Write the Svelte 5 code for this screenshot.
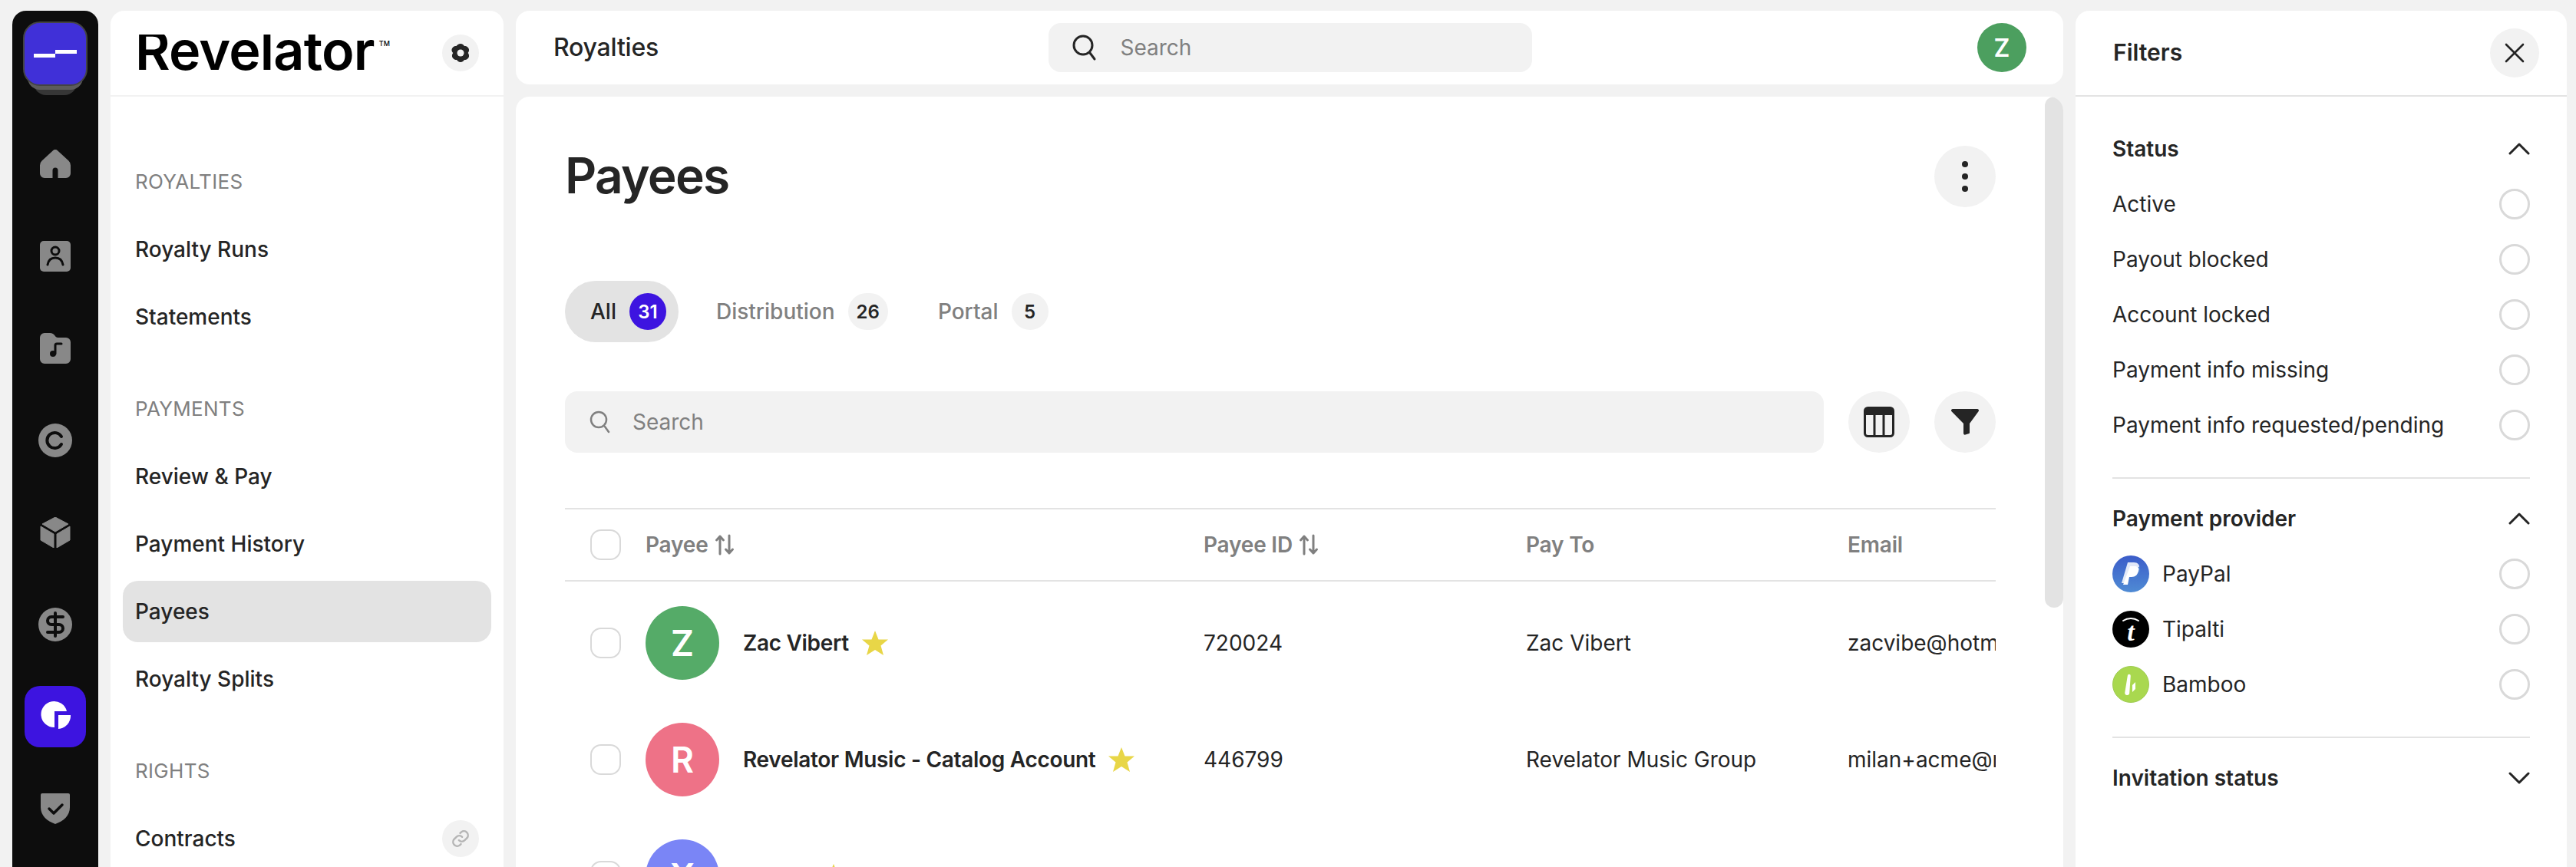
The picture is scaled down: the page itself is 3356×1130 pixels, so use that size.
<script>
  const nav = [
    { label: 'ROYALTIES', items: ['Royalty Runs', 'Statements'] },
    { label: 'PAYMENTS', items: ['Review & Pay', 'Payment History', 'Payees', 'Royalty Splits'] },
    { label: 'RIGHTS', items: ['Contracts'] }
  ];

  const tabs = [
    { name: 'All', count: 31, active: true },
    { name: 'Distribution', count: 26 },
    { name: 'Portal', count: 5 }
  ];

  const payees = [
    { initial: 'Z', color: '#55ab68', name: 'Zac Vibert', id: '720024', payTo: 'Zac Vibert', email: 'zacvibe@hotmail.com' },
    { initial: 'R', color: '#ee7287', name: 'Revelator Music - Catalog Account', id: '446799', payTo: 'Revelator Music Group', email: 'milan+acme@revelator.com' },
    { initial: 'X', color: '#7a85f6', name: 'Xavier', id: '', payTo: '', email: '' }
  ];

  const statuses = ['Active', 'Payout blocked', 'Account locked', 'Payment info missing', 'Payment info requested/pending'];
  const providers = ['PayPal', 'Tipalti', 'Bamboo'];
</script>

<div class="page">
  <aside class="rail">
    <div class="logo-stack">
      <div class="logo-layer third"></div>
      <div class="logo-layer second"></div>
      <div class="logo">
        <svg width="56" height="10" viewBox="0 0 56 10"><path d="M0 5h28v5H0zM28 0h28v5H28z" fill="#fff" /></svg>
      </div>
    </div>

    <div class="rail-icons">
      <div class="rail-icon">
        <svg width="40" height="38" viewBox="0 0 40 38"><path d="M17 1.2a4.4 4.4 0 0 1 6 0l14.4 13.4A8 8 0 0 1 40 20.500V31a6 6 0 0 1-6 6H23.500V27a3.500 3.500 0 0 0-7 0v10H6a6 6 0 0 1-6-6V20.500a8 8 0 0 1 2.600-5.900z" fill="#888" /></svg>
      </div>
      <div class="rail-icon">
        <svg width="40" height="40" viewBox="0 0 40 40"><rect width="40" height="40" rx="5" fill="#888" /><circle cx="20" cy="13" r="5" fill="none" stroke="#0d0d0d" stroke-width="3" /><path d="M10 31c1-6 5-9 10-9s9 3 10 9" fill="none" stroke="#0d0d0d" stroke-width="3" stroke-linecap="round" /></svg>
      </div>
      <div class="rail-icon">
        <svg width="40" height="40" viewBox="0 0 40 40"><path d="M0 6a6 6 0 0 1 6-6h7c3 0 5 1.500 6.500 3.500 1 1.500 2 2.500 4 2.500H34a6 6 0 0 1 6 6v22a6 6 0 0 1-6 6H6a6 6 0 0 1-6-6z" fill="#888" /><circle cx="17" cy="27" r="4" fill="#0d0d0d" /><path d="M20 27V16a2 2 0 0 1 2-2h6" fill="none" stroke="#0d0d0d" stroke-width="3" stroke-linecap="round" /></svg>
      </div>
      <div class="rail-icon">
        <svg width="44" height="44" viewBox="0 0 44 44"><circle cx="22" cy="22" r="22" fill="#888" /><path d="M30 17a10 10 0 1 0 0 10" fill="none" stroke="#0d0d0d" stroke-width="4" stroke-linecap="round" /></svg>
      </div>
      <div class="rail-icon">
        <svg width="40" height="40" viewBox="0 0 40 40"><path d="M20 0l17 9-17 10L3 9zM1 12l17 10v18L1 30zM39 12L22 22v18l17-10z" fill="#888" stroke="#888" stroke-width="1" stroke-linejoin="round" /></svg>
      </div>
      <div class="rail-icon">
        <svg width="44" height="44" viewBox="0 0 44 44"><circle cx="22" cy="22" r="22" fill="#888" /><path d="M32 12H17a5 5 0 0 0 0 10h10a5 5 0 0 1 0 10H12M22 7v30" fill="none" stroke="#0d0d0d" stroke-width="4" stroke-linecap="round" /></svg>
      </div>
      <div class="rail-icon active">
        <svg width="40" height="42" viewBox="0 0 40 42"><path d="M19 35a17 17 0 1 1 16-21H19z" fill="#fff" /><path d="M24 19h16a17 17 0 0 1-16 18z" fill="#fff" /></svg>
      </div>
      <div class="rail-icon">
        <svg width="38" height="40" viewBox="0 0 38 40"><path d="M2 0h34a2 2 0 0 1 2 2v16c0 11-8 18-19 22C8 36 0 29 0 18V2a2 2 0 0 1 2-2z" fill="#888" /><path d="M11 20l6 6 11-11" fill="none" stroke="#0d0d0d" stroke-width="3.500" stroke-linecap="round" stroke-linejoin="round" /></svg>
      </div>
    </div>
  </aside>

  <aside class="sidebar">
    <header class="brand">
      <div class="wordmark"><span class="word">Revelator</span><span class="tm">TM</span></div>
      <button class="round small">
        <svg width="24" height="24" viewBox="0 0 24 24"><path d="M12 0c2.500 0 4 1.500 5 3 2 0 4 .5 5.500 3 1.200 2.500.3 4.500-.8 6 1.100 1.500 2 3.500.8 6-1.500 2.500-3.500 3-5.500 3-1 1.500-2.500 3-5 3s-4-1.500-5-3c-2 0-4-.5-5.500-3-1.200-2.500-.3-4.500.8-6C.7 10.500-.2 8.500 1 6c1.500-2.500 3.500-3 5.500-3 1-1.500 3-3 5.500-3z" fill="#252525" /><circle cx="12" cy="12" r="4.500" fill="#f2f2f2" /></svg>
      </button>
    </header>

    <nav class="nav">
      {#each nav as section}
        <div class="nav-label">{section.label}</div>
        <ul class="nav-list">
          {#each section.items as item}
            <li class="nav-item" class:current={item === 'Payees'}>
              {item}
              {#if item === 'Contracts'}
                <button class="round small">
                  <svg width="26" height="26" viewBox="0 0 24 24" fill="none" stroke="#b5b5b5" stroke-width="2.200" stroke-linecap="round"><path d="M10 14a5 5 0 0 0 7 0l3-3a5 5 0 0 0-7-7l-1.500 1.500" /><path d="M14 10a5 5 0 0 0-7 0l-3 3a5 5 0 0 0 7 7l1.500-1.500" /></svg>
                </button>
              {/if}
            </li>
          {/each}
        </ul>
      {/each}
    </nav>
  </aside>

  <div class="center">
    <header class="topbar">
      <div class="crumb">Royalties</div>
      <div class="top-search">
        <svg width="34" height="36" viewBox="0 0 34 36" fill="none" stroke="#252525" stroke-width="3" stroke-linecap="round"><circle cx="15" cy="15" r="12" /><path d="M24 25l6 8" /></svg>
        <span>Search</span>
      </div>
      <div class="top-user"><span class="user-avatar">Z</span></div>
    </header>

    <main class="content">
      <div class="title-row">
        <h1>Payees</h1>
        <button class="round big">
          <svg width="8" height="40" viewBox="0 0 8 40" fill="#252525"><circle cx="4" cy="4" r="4" /><circle cx="4" cy="20" r="4" /><circle cx="4" cy="36" r="4" /></svg>
        </button>
      </div>

      <div class="tabs">
        {#each tabs as tab}
          <div class="tab" class:on={tab.active}>
            <span class="tab-name">{tab.name}</span>
            <span class="tab-count">{tab.count}</span>
          </div>
        {/each}
      </div>

      <div class="tools">
        <div class="table-search">
          <svg width="28" height="30" viewBox="0 0 28 30" fill="none" stroke="#808080" stroke-width="2.500" stroke-linecap="round"><circle cx="12" cy="12" r="10" /><path d="M20 21l5 7" /></svg>
          <span>Search</span>
        </div>
        <button class="round big">
          <svg width="40" height="40" viewBox="0 0 40 40"><rect x="1.500" y="1.500" width="37" height="37" rx="4" fill="none" stroke="#252525" stroke-width="3" /><path d="M3 3h34v8H3z" fill="#252525" /><path d="M14 11v27M26 11v27" stroke="#252525" stroke-width="3" /></svg>
        </button>
        <button class="round big">
          <svg width="36" height="34" viewBox="0 0 36 34"><path d="M2 0h32a2 2 0 0 1 1.700 3L24 19v12a1.500 1.500 0 0 1-.5 1l-5 1.500a2 2 0 0 1-2.500-1.500V19L.3 3A2 2 0 0 1 2 0z" fill="#252525" /></svg>
        </button>
      </div>

      <div class="table">
        <div class="thead grid-row">
          <span class="check"></span>
          <span class="th">Payee
            <svg width="26" height="28" viewBox="0 0 26 28" fill="none" stroke="#808080" stroke-width="3" stroke-linecap="round" stroke-linejoin="round"><path d="M7 26V3M2.500 8L7 3l4.500 5M19 2v23M14.500 20l4.500 5 4.500-5" /></svg>
          </span>
          <span class="th">Payee ID
            <svg width="26" height="28" viewBox="0 0 26 28" fill="none" stroke="#808080" stroke-width="3" stroke-linecap="round" stroke-linejoin="round"><path d="M7 26V3M2.500 8L7 3l4.500 5M19 2v23M14.500 20l4.500 5 4.500-5" /></svg>
          </span>
          <span class="th">Pay To</span>
          <span class="th">Email</span>
        </div>

        <div class="tbody">
          {#each payees as p}
            <div class="grid-row trow">
              <span class="check"></span>
              <div class="payee">
                <span class="avatar" style="background: {p.color};">{p.initial}</span>
                <span class="payee-name">{p.name}</span>
                <svg width="34" height="32" viewBox="0 0 34 32"><path d="M17 0l4.500 11.500H34l-9.500 8L28 32l-11-7-11 7 3.500-12.500L0 11.500h12.500z" fill="#e8d647" /></svg>
              </div>
              <span class="cell">{p.id}</span>
              <span class="cell">{p.payTo}</span>
              <span class="cell">{p.email}</span>
            </div>
          {/each}
        </div>
      </div>

      <div class="scroll-thumb"></div>
    </main>
  </div>

  <aside class="filters">
    <header class="filters-head">
      <span class="filters-title">Filters</span>
      <button class="round close">
        <svg width="26" height="26" viewBox="0 0 26 26" fill="none" stroke="#252525" stroke-width="2.600" stroke-linecap="round"><path d="M2 2l22 22M24 2L2 24" /></svg>
      </button>
    </header>

    <div class="filters-body">
      <section class="group">
        <div class="group-head">
          Status
          <svg width="28" height="16" viewBox="0 0 28 16" fill="none" stroke="#252525" stroke-width="3" stroke-linecap="round" stroke-linejoin="round"><path d="M2 14L14 2l12 12" /></svg>
        </div>
        <div class="options">
          {#each statuses as s}
            <div class="option"><span>{s}</span><span class="radio"></span></div>
          {/each}
        </div>
      </section>

      <section class="group">
        <div class="group-head">
          Payment provider
          <svg width="28" height="16" viewBox="0 0 28 16" fill="none" stroke="#252525" stroke-width="3" stroke-linecap="round" stroke-linejoin="round"><path d="M2 14L14 2l12 12" /></svg>
        </div>
        <div class="options">
          {#each providers as name}
            <div class="option">
              <span class="provider">
                {#if name === 'PayPal'}
                  <svg width="48" height="48" viewBox="0 0 48 48">
                    <defs><linearGradient id="pp" x1="0" y1="0" x2="0" y2="1"><stop offset="0" stop-color="#3b5cc9" /><stop offset="1" stop-color="#4f8bd4" /></linearGradient></defs>
                    <circle cx="24" cy="24" r="24" fill="url(#pp)" />
                    <path d="M20 9h8c5 0 8 3 7 8-1 6-5 9-10 9h-4l-2 10h-7z" fill="#fff" opacity=".85" />
                    <path d="M23 14h6c4 0 6 2 5 6-1 5-4 8-9 8h-3l-2 10h-6z" fill="#fff" />
                    <path d="M34 15c2 2 2 4 1 7-1 5-5 8-10 8" fill="none" stroke="#4a7fd0" stroke-width="1.500" />
                  </svg>
                {:else if name === 'Tipalti'}
                  <svg width="48" height="48" viewBox="0 0 48 48">
                    <circle cx="24" cy="24" r="24" fill="#000" />
                    <path d="M14 13c6-4 14-4 20 0" fill="none" stroke="#fff" stroke-width="2" stroke-linecap="round" />
                    <text x="24" y="39" text-anchor="middle" class="tipalti-t">t</text>
                  </svg>
                {:else}
                  <svg width="48" height="48" viewBox="0 0 48 48">
                    <circle cx="24" cy="24" r="23.500" fill="#a9d84f" stroke="#9ecb52" />
                    <path d="M19 13c0-3 4-3 4 0v22c0 2-1 3-3 3s-3-1-3-3z" fill="#fff" transform="rotate(4 20 24)" />
                    <path d="M26 25l4-4v9l-4 4z" fill="#fff" />
                  </svg>
                {/if}
                <span>{name}</span>
              </span>
              <span class="radio"></span>
            </div>
          {/each}
        </div>
      </section>

      <section class="group last">
        <div class="group-head">
          Invitation status
          <svg width="28" height="16" viewBox="0 0 28 16" fill="none" stroke="#252525" stroke-width="3" stroke-linecap="round" stroke-linejoin="round"><path d="M2 2l12 12L26 2" /></svg>
        </div>
      </section>
    </div>
  </aside>
</div>

<style>
  :global(body) {
    margin: 0;
    background: #f2f2f2;
  }

  .page {
    display: flex;
    gap: 16px;
    height: 1130px;
    padding: 14px 12px 0 16px;
    box-sizing: border-box;
    overflow: hidden;
    font-family: Inter, "Liberation Sans", sans-serif;
    font-size: 28px;
    color: #252525;
  }

  button {
    border: none;
    padding: 0;
    font: inherit;
  }

  /* icon rail */
  .rail {
    flex: 0 0 112px;
    background: #0d0d0d;
    border-radius: 18px 18px 0 0;
    display: flex;
    flex-direction: column;
    align-items: center;
    padding-top: 14px;
    box-sizing: border-box;
  }

  .logo-stack {
    position: relative;
    width: 84px;
    height: 96px;
  }

  .logo {
    position: relative;
    box-sizing: border-box;
    width: 84px;
    height: 84px;
    background: #4030d8;
    border: 2px solid #444;
    border-radius: 22px;
    display: flex;
    align-items: center;
    justify-content: center;
  }

  .logo-layer {
    position: absolute;
    border-radius: 0 0 16px 16px;
  }

  .logo-layer.second {
    left: 6px;
    right: 6px;
    top: 60px;
    height: 29px;
    background: #5c5c5c;
  }

  .logo-layer.third {
    left: 14px;
    right: 14px;
    top: 66px;
    height: 30px;
    background: #363636;
  }

  .rail-icons {
    display: flex;
    flex-direction: column;
    align-items: center;
    margin-top: 30px;
  }

  .rail-icon {
    width: 80px;
    height: 120px;
    display: flex;
    align-items: center;
    justify-content: center;
  }

  .rail-icon.active {
    height: 80px;
    margin: 20px 0;
    background: #3d14e0;
    border-radius: 20px;
  }

  /* second column */
  .sidebar {
    flex: 0 0 512px;
    background: #fff;
    border-radius: 18px 18px 0 0;
    overflow: hidden;
  }

  .brand {
    height: 112px;
    box-sizing: border-box;
    border-bottom: 2px solid #f2f2f2;
    display: flex;
    justify-content: space-between;
    padding: 31px 32px 0;
  }

  .wordmark {
    display: flex;
    height: 48px;
    overflow: hidden;
    color: #000;
  }

  .word {
    font-size: 70px;
    line-height: 41px;
    font-weight: 600;
    letter-spacing: -0.800px;
  }

  .tm {
    font-size: 9px;
    font-weight: 500;
    line-height: 9px;
    margin: 7px 0 0 6px;
  }

  .round {
    display: flex;
    align-items: center;
    justify-content: center;
    border-radius: 50%;
    background: #f2f2f2;
    flex: none;
  }

  .round.small {
    width: 48px;
    height: 48px;
  }

  .round.big {
    width: 80px;
    height: 80px;
  }

  .round.close {
    width: 64px;
    height: 64px;
  }

  .nav {
    padding: 87px 16px 0;
  }

  .nav-label {
    height: 48px;
    line-height: 48px;
    padding-left: 16px;
    font-size: 26px;
    letter-spacing: 0.300px;
    color: #808080;
    margin-bottom: 24px;
  }

  .nav-list {
    list-style: none;
    margin: 0 0 56px;
    padding: 0;
    display: flex;
    flex-direction: column;
    gap: 8px;
  }

  .nav-item {
    height: 80px;
    padding: 0 16px;
    border-radius: 20px;
    display: flex;
    align-items: center;
    justify-content: space-between;
    font-weight: 500;
  }

  .nav-item.current {
    background: #e3e3e3;
  }

  /* main column */
  .center {
    flex: 0 0 2016px;
    display: flex;
    flex-direction: column;
    gap: 16px;
  }

  .topbar {
    height: 96px;
    flex: none;
    background: #fff;
    border-radius: 18px;
    display: grid;
    grid-template-columns: 1fr 630px 1fr;
    align-items: center;
    padding: 0 48px 0 49px;
  }

  .crumb {
    font-size: 32px;
    font-weight: 500;
    letter-spacing: -0.200px;
    padding-bottom: 2px;
  }

  .top-search {
    height: 64px;
    background: #f2f2f2;
    border-radius: 16px;
    display: flex;
    align-items: center;
    gap: 30px;
    padding-left: 30px;
    color: #808080;
  }

  .top-user {
    display: flex;
    justify-content: flex-end;
  }

  .user-avatar {
    width: 64px;
    height: 64px;
    border-radius: 50%;
    background: #4c9f5f;
    color: #fff;
    font-size: 32px;
    font-weight: 600;
    display: flex;
    align-items: center;
    justify-content: center;
  }

  .content {
    position: relative;
    flex: 1;
    min-height: 0;
    background: #fff;
    border-radius: 18px 18px 0 0;
    padding: 64px 88px 0 64px;
    overflow: hidden;
  }

  .title-row {
    display: flex;
    justify-content: space-between;
    align-items: center;
  }

  h1 {
    margin: 0 0 3px;
    font-size: 64px;
    font-weight: 600;
    letter-spacing: -1.700px;
  }

  .tabs {
    display: flex;
    margin-top: 96px;
  }

  .tab {
    height: 80px;
    border-radius: 40px;
    padding: 0 16px 0 33px;
    display: flex;
    align-items: center;
    gap: 17px;
    color: #808080;
    font-weight: 500;
    margin-right: 16px;
  }

  .tab.on {
    background: #e3e3e3;
    color: #252525;
  }

  .tab-count {
    min-width: 48px;
    height: 48px;
    padding: 0 11px;
    box-sizing: border-box;
    border-radius: 24px;
    background: #f2f2f2;
    color: #252525;
    font-size: 24px;
    font-weight: 600;
    display: flex;
    align-items: center;
    justify-content: center;
  }

  .tab.on .tab-count {
    background: #3d14e0;
    color: #fff;
  }

  .tools {
    display: flex;
    gap: 32px;
    margin-top: 64px;
  }

  .table-search {
    flex: 1;
    height: 80px;
    background: #f2f2f2;
    border-radius: 16px;
    display: flex;
    align-items: center;
    gap: 28px;
    padding-left: 32px;
    color: #808080;
  }

  .table {
    margin-top: 72px;
    border-top: 2px solid #e3e3e3;
  }

  .grid-row {
    display: grid;
    grid-template-columns: 105px 727px 420px 419px 193px;
    align-items: center;
    white-space: nowrap;
    overflow: hidden;
  }

  .thead {
    height: 92px;
    border-bottom: 2px solid #e3e3e3;
  }

  .check {
    width: 40px;
    height: 40px;
    margin-left: 33px;
    box-sizing: border-box;
    border: 2.500px solid #d9d9d9;
    border-radius: 14px;
  }

  .th {
    color: #808080;
    font-weight: 600;
    letter-spacing: -0.200px;
    display: flex;
    align-items: center;
    gap: 8px;
  }

  .tbody {
    padding-top: 4px;
  }

  .trow {
    height: 152px;
  }

  .payee {
    display: flex;
    align-items: center;
  }

  .avatar {
    width: 96px;
    height: 96px;
    border-radius: 50%;
    color: #fff;
    font-size: 46px;
    font-weight: 600;
    display: flex;
    align-items: center;
    justify-content: center;
    margin-right: 31px;
  }

  .payee-name {
    font-weight: 600;
    letter-spacing: -0.300px;
    margin-right: 17px;
  }

  .cell {
    overflow: hidden;
  }

  .scroll-thumb {
    position: absolute;
    right: 0;
    top: 0;
    width: 24px;
    height: 666px;
    background: #e3e3e3;
    border-radius: 12px;
  }

  /* filters */
  .filters {
    flex: 0 0 640px;
    background: #fff;
    border-radius: 18px 18px 0 0;
  }

  .filters-head {
    height: 112px;
    box-sizing: border-box;
    border-bottom: 2px solid #e3e3e3;
    padding: 0 36px 0 49px;
    display: flex;
    align-items: center;
    justify-content: space-between;
    font-size: 30px;
    font-weight: 600;
  }

  .filters-title {
    padding-bottom: 3px;
  }

  .filters-body {
    padding: 16px 48px 0;
  }

  .group {
    padding: 32px 0 48px;
    border-bottom: 2px solid #e3e3e3;
  }

  .group.last {
    border-bottom: none;
  }

  .group-head {
    height: 40px;
    display: flex;
    align-items: center;
    justify-content: space-between;
    font-weight: 600;
  }

  .options {
    margin-top: 32px;
    display: flex;
    flex-direction: column;
    gap: 32px;
  }

  .option {
    height: 40px;
    display: flex;
    align-items: center;
    justify-content: space-between;
  }

  .provider {
    display: flex;
    align-items: center;
    gap: 17px;
  }

  .radio {
    width: 40px;
    height: 40px;
    box-sizing: border-box;
    border: 3px solid #d9d9d9;
    border-radius: 50%;
  }

  .tipalti-t {
    font-family: "Liberation Serif", serif;
    font-style: italic;
    font-weight: 700;
    font-size: 34px;
    fill: #fff;
  }
</style>
